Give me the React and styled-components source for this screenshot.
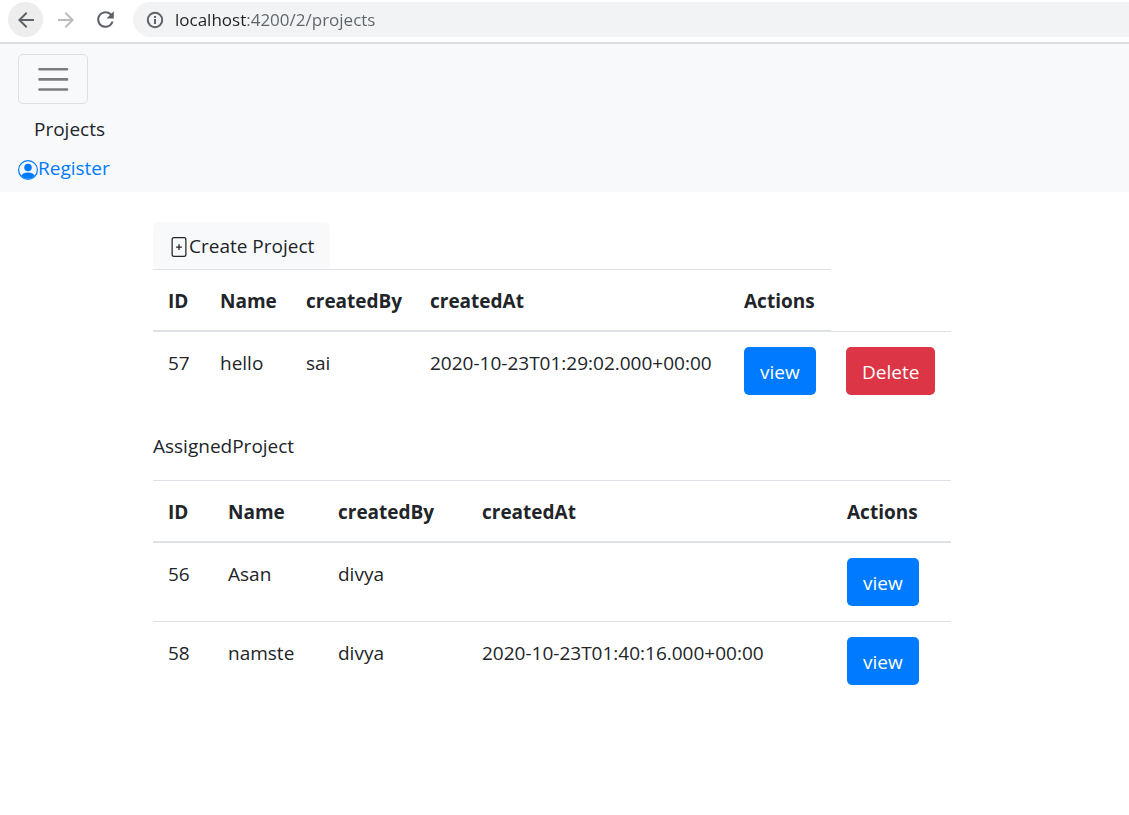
import React from "react";
import styled, { createGlobalStyle } from "styled-components";
import { MdArrowBack, MdArrowForward, MdRefresh } from "react-icons/md";

const GlobalStyle = createGlobalStyle`
  *, *::before, *::after { box-sizing: border-box; }
  body {
    margin: 0;
    background: #fff;
    color: #212529;
    font-family: "Open Sans", "Noto Sans", sans-serif;
    font-size: 19px;
    line-height: 30px;
  }
  button, input { font: inherit; }
`;

const BrowserBar = styled.header`
  display: flex;
  align-items: center;
  gap: 5px;
  height: 44px;
  padding: 2px 0 5px 8px;
  border-bottom: 2px solid #dadce0;
`;

const BrowserButton = styled.button`
  display: grid;
  place-items: center;
  width: 35px;
  height: 35px;
  padding: 0;
  border: 0;
  border-radius: 50%;
  background: ${(p) => (p.$active ? "#ededed" : "transparent")};
  color: ${(p) => (p.$muted ? "#babcbe" : "#5f6368")};
`;

const AddressBar = styled.label`
  display: flex;
  flex: 1;
  align-items: center;
  gap: 10px;
  height: 35px;
  margin-left: 5px;
  padding-left: 12px;
  border-radius: 18px 0 0 18px;
  background: #f1f3f4;
  color: #5f6368;
`;

/* The host name is darker than the rest of the address. */
const AddressInput = styled.input`
  flex: 1;
  min-width: 0;
  padding: 0;
  border: 0;
  outline: 0;
  font-size: 17px;
  line-height: 24px;
  color: transparent;
  background: linear-gradient(to right, #202124 71px, #5f6368 71px);
  background-clip: text;
`;

const Navbar = styled.nav`
  display: flex;
  flex-direction: column;
  align-items: flex-start;
  padding: 10px 18px 9px;
  background: #f8f9fa;
`;

const Toggler = styled.button`
  display: flex;
  padding: 5px 15px;
  border: 1px solid rgba(0, 0, 0, 0.1);
  border-radius: 5px;
  background: transparent;
  color: rgba(0, 0, 0, 0.5);
`;

const Brand = styled.a`
  padding: 10px 16px 0;
  color: #212529;
  text-decoration: none;
`;

const NavLink = styled.a`
  display: flex;
  align-items: center;
  margin-top: 9px;
  color: #007bff;
  text-decoration: none;
`;

/* Inline icons sit slightly below the middle of the text line. */
const InlineIcon = styled.svg`
  width: 20px;
  height: 20px;
  margin-top: 3px;
`;

const Main = styled.main`
  padding: 30px 178px 30px 153px;
`;

const fills = { primary: "#007bff", danger: "#dc3545", light: "#f8f9fa" };

const Button = styled.button`
  display: flex;
  align-items: center;
  height: ${(p) => (p.$kind === "light" ? 47 : 48)}px;
  padding: ${(p) => (p.$kind === "light" ? 0 : 2)}px 16px 0;
  border: 0;
  border-radius: 5px;
  background: ${(p) => fills[p.$kind]};
  color: ${(p) => (p.$kind === "light" ? "#212529" : "#fff")};
`;

const Table = styled.table`
  width: 100%;
  table-layout: fixed;
  border-collapse: separate;
  border-spacing: 0;
`;

const Col = styled.col`
  width: ${(p) => (p.$width ? `${p.$width}px` : "auto")};
`;

const HeadCell = styled.th`
  padding: 16px 15px 14px;
  border-top: 1px solid #dee2e6;
  border-bottom: 2px solid #dee2e6;
  font-weight: 700;
  text-align: left;
`;

const HeadSpacer = styled.td`
  border-bottom: 1px solid #dee2e6;
`;

const Cell = styled.td`
  padding: 16px 15px 14px;
  vertical-align: top;
  white-space: nowrap;
  tr + tr > & { border-top: 1px solid #dee2e6; }
`;

const ActionCell = styled(Cell)`
  padding: 15px;
`;

const SectionTitle = styled.p`
  margin: 21px 0 19px;
`;

const headings = ["ID", "Name", "createdBy", "createdAt", "Actions"];

const ownProjects = [
  { id: 57, name: "hello", by: "sai", at: "2020-10-23T01:29:02.000+00:00" },
];

const assignedProjects = [
  { id: 56, name: "Asan", by: "divya", at: "" },
  { id: 58, name: "namste", by: "divya", at: "2020-10-23T01:40:16.000+00:00" },
];

function InfoIcon() {
  return (
    <svg width="20" height="20" viewBox="0 0 20 20" fill="none" stroke="currentColor" strokeWidth="2" aria-hidden="true">
      <circle cx="10" cy="10" r="7.2" />
      <path d="M10 9v5M10 6v2" />
    </svg>
  );
}

function PersonIcon() {
  return (
    <InlineIcon viewBox="0 0 16 16" fill="currentColor" aria-hidden="true">
      <path d="M13.468 12.37C12.758 11.226 11.195 10 8 10s-4.757 1.225-5.468 2.37A6.987 6.987 0 0 0 8 15a6.987 6.987 0 0 0 5.468-2.63z" />
      <circle cx="8" cy="6" r="3" />
      <path fillRule="evenodd" d="M8 1a7 7 0 1 0 0 14A7 7 0 0 0 8 1zM0 8a8 8 0 1 1 16 0A8 8 0 0 1 0 8z" />
    </InlineIcon>
  );
}

function FilePlusIcon() {
  return (
    <InlineIcon viewBox="0 0 16 16" fill="none" stroke="currentColor" aria-hidden="true">
      <rect x="2.5" y="0.5" width="11" height="15" rx="1.5" />
      <path d="M8 6v4M6 8h4" strokeLinecap="round" />
    </InlineIcon>
  );
}

function MenuIcon() {
  return (
    <svg width="38" height="38" viewBox="0 0 30 30" fill="none" stroke="currentColor" aria-hidden="true">
      <path d="M4.3 7.3h21.8M4.3 15.3h21.8M4.3 23.3h21.8" strokeWidth="2" strokeLinecap="round" strokeMiterlimit="10" />
    </svg>
  );
}

function ProjectTable({ widths, projects, removable }) {
  return (
    <Table>
      <colgroup>
        {widths.map((w, i) => (
          <Col key={i} $width={w} />
        ))}
      </colgroup>
      <thead>
        <tr>
          {headings.map((h) => (
            <HeadCell key={h} scope="col">{h}</HeadCell>
          ))}
          {removable && <HeadSpacer />}
        </tr>
      </thead>
      <tbody>
        {projects.map((p) => (
          <tr key={p.id}>
            <Cell>{p.id}</Cell>
            <Cell>{p.name}</Cell>
            <Cell>{p.by}</Cell>
            <Cell>{p.at}</Cell>
            <ActionCell><Button type="button" $kind="primary">view</Button></ActionCell>
            {removable && (
              <ActionCell><Button type="button" $kind="danger">Delete</Button></ActionCell>
            )}
          </tr>
        ))}
      </tbody>
    </Table>
  );
}

export default function App() {
  return (
    <>
      <GlobalStyle />
      <BrowserBar>
        <BrowserButton type="button" $active aria-label="Back"><MdArrowBack size={24} /></BrowserButton>
        <BrowserButton type="button" $muted aria-label="Forward"><MdArrowForward size={24} /></BrowserButton>
        <BrowserButton type="button" aria-label="Reload"><MdRefresh size={25} /></BrowserButton>
        <AddressBar>
          <InfoIcon />
          <AddressInput type="text" aria-label="Address" defaultValue="localhost:4200/2/projects" />
        </AddressBar>
      </BrowserBar>
      <Navbar>
        <Toggler type="button" aria-label="Toggle navigation"><MenuIcon /></Toggler>
        <Brand href="#projects">Projects</Brand>
        <NavLink href="#register"><PersonIcon />Register</NavLink>
      </Navbar>
      <Main>
        <Button type="button" $kind="light"><FilePlusIcon />Create Project</Button>
        <ProjectTable widths={[52, 86, 124, null, 102, 120]} projects={ownProjects} removable />
        <SectionTitle>AssignedProject</SectionTitle>
        <ProjectTable widths={[60, 110, 144, null, 119]} projects={assignedProjects} />
      </Main>
    </>
  );
}
